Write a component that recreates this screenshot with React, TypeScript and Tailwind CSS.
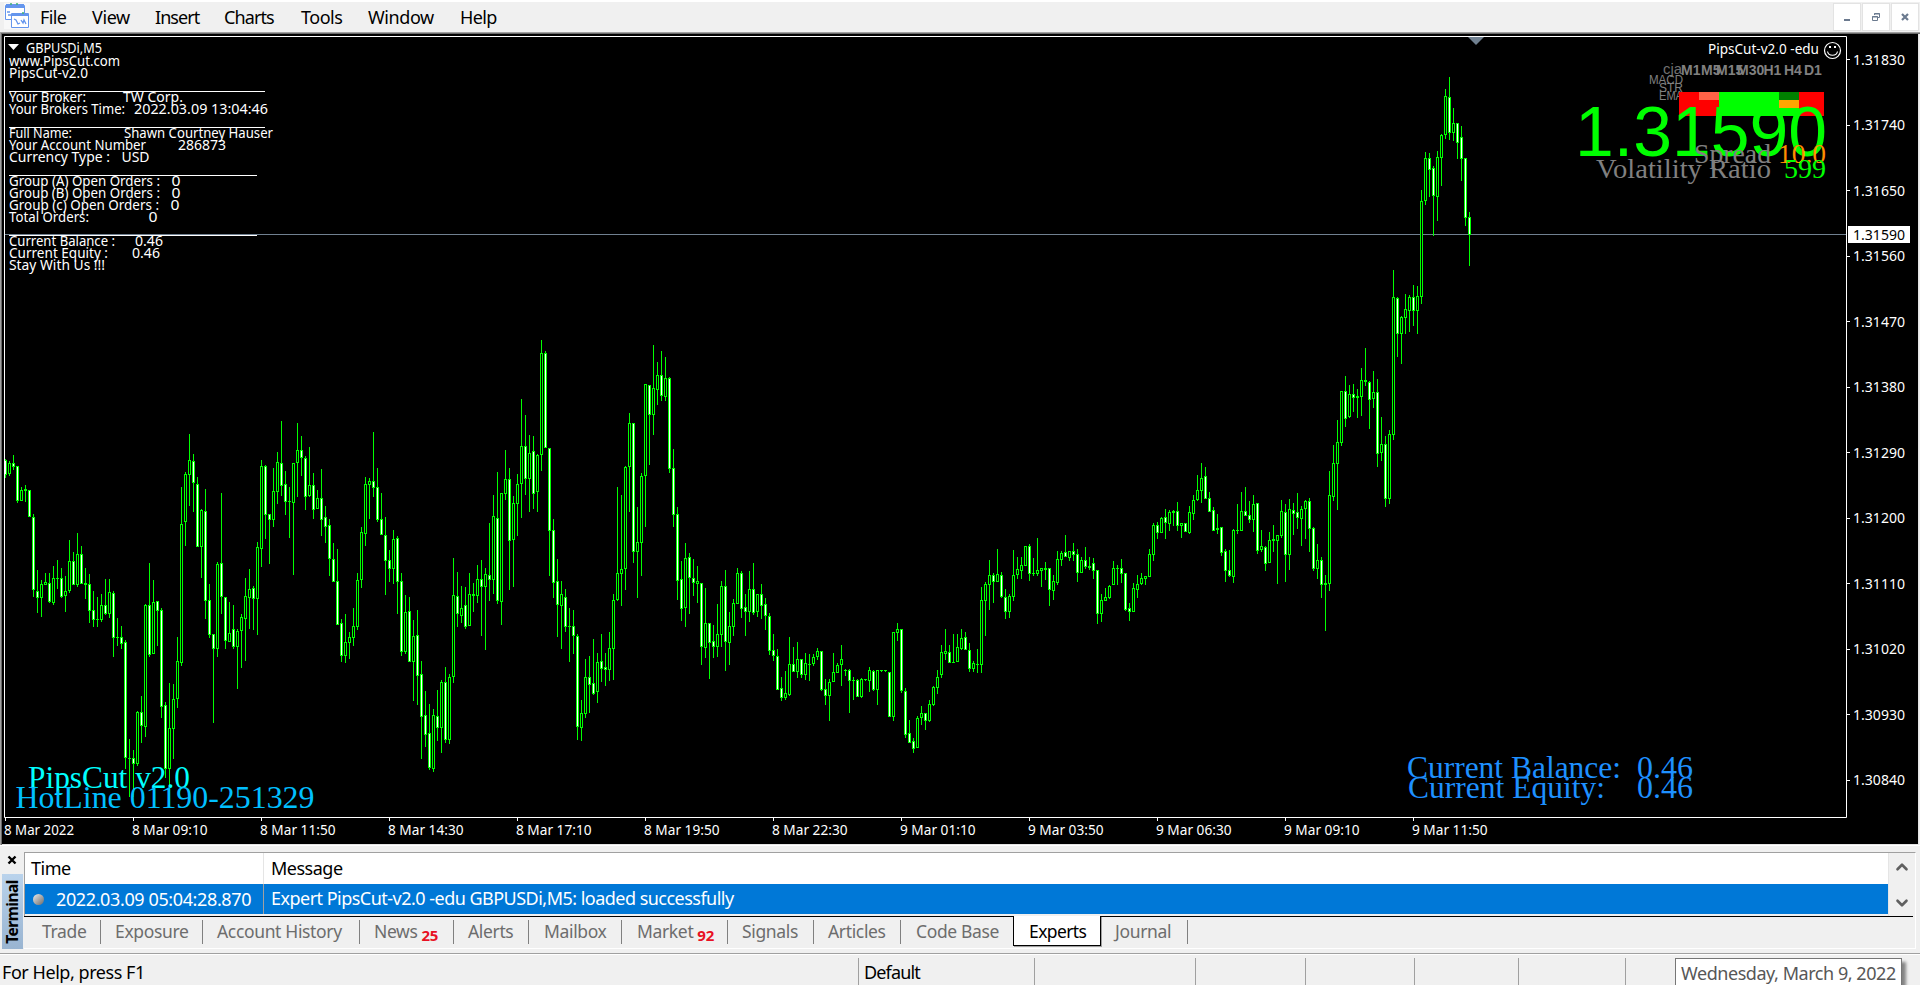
import React from 'react';
import { ChevronDown, ChevronUp } from 'lucide-react';
import clsx from 'clsx';

const LIME = '#00ff00';
const UI_FONT = "font-['Noto_Sans','Open_Sans',sans-serif]";
const CHART_FONT = "'Noto Sans', 'Open Sans', sans-serif";
const ARIAL = "'Liberation Sans', Arial, sans-serif";
const TIMES = "'Liberation Serif', 'Times New Roman', serif";

interface Segment {
  first: number;
  top: number;
  scale: number;
  rows: string;
}

// high/open-close top/open-close bottom/low, "-" for a falling bar and "+" for a rising one
const segments: Segment[] = [
  {
    first: 0,
    top: 400,
    scale: 3,
    rows: `
      177/180/224/234- 183/189/221/228+ 165/189/200/210- 198/198/303/308- 261/270/303/303+
      255/267/273/306- 270/270/351/351- 342/351/570/591- 510/573/594/639- 540/552/594/651+
      519/546/555/555+ 519/549/606/609- 498/534/609/615+ 480/534/537/567+ 504/534/591/594-
      528/573/588/636+ 420/483/573/579+ 456/483/555/555- 399/462/555/560+ 438/462/552/552-
      504/549/555/597- 522/552/633/669- 573/630/660/681- 591/657/660/681+ 582/615/660/666+
      537/615/642/645- 537/576/642/654+ 573/579/714/771- 654/711/714/738+ 678/711/732/747-
      720/726/1074/1107- 1017/1074/1077/1190+ 1050/1074/1092/1190- 933/936/1092/1098+ 888/936/978/1029-
      612/615/981/1011+ 489/615/765/771- 540/606/762/762+ 603/603/633/738- 624/630/921/954-
      906/915/1107/1134- 849/984/1107/1160+ 852/897/987/1077+ 711/783/897/924+ 261/372/789/798+
      216/222/366/438+ 102/180/225/318+ 162/183/249/336- 231/252/441/441- 327/330/441/534+
      267/333/603/657- 552/600/705/714- 702/702/747/969- 486/492/747/771+ 279/489/591/642-
      591/591/723/747- 606/699/726/726+ 615/687/741/747- 687/693/741/867+ 642/651/693/804+
      534/588/657/783+ 507/567/594/687+ 558/564/597/690- 426/441/597/705+ 180/198/447/501+
      195/198/345/417- 342/342/360/492- 204/273/360/381+ 156/186/276/312+ 63/189/258/288-
      213/252/306/345- 261/303/306/414+ 189/189/309/525+ 69/150/189/291+ 108/150/174/228-
      168/174/291/330- 141/255/288/291+ 219/255/330/357- 270/294/327/327+`,
  },
  {
    first: 79,
    top: 320,
    scale: 3,
    rows: `
      447/534/600/648- 558/591/621/669- 597/615/717/768- 669/717/786/786- 687/783/915/915-
      897/909/1008/1026- 882/966/1008/1029+ 936/951/969/1017+ 864/918/954/978+ 759/780/921/930+
      621/636/780/804+ 471/492/642/678+ 474/483/495/597+ 336/483/504/531- 444/501/600/606-
      519/597/645/645- 591/645/723/825- 690/720/747/786- 630/657/747/792+ 648/654/786/882-
      759/783/996/1008- 825/876/996/1002+ 831/873/1026/1026- 900/948/1026/1143+ 870/945/1068/1155-
      1023/1062/1191/1317- 1113/1185/1245/1281- 1152/1239/1344/1350- 1167/1185/1347/1356+ 1110/1188/1224/1263-
      1080/1086/1224/1299+ 1041/1086/1260/1269- 1062/1071/1260/1272+ 714/825/1071/1089+ 756/828/882/921-
      798/864/888/909+ 801/855/921/927- 759/822/918/918+ 789/822/828/876+ 735/777/828/849+
      720/777/801/948- 744/762/801/990+ 609/765/780/843- 525/588/780/822+ 456/594/843/852-
      519/519/846/915+ 390/477/522/540+ 444/477/663/810- 528/549/660/801+ 462/492/552/648+
      237/378/492/594+ 285/378/477/525- 345/399/477/576+ 348/393/522/567- 402/405/516/576+
      60/99/405/453+ 93/99/384/384- 384/384/633/768- 597/630/789/834- 717/783/855/951-
      783/822/858/987+ 807/831/921/936- 864/918/921/1026+ 870/918/948/1002- 942/948/1221/1260-
      1140/1179/1224/1263+ 1017/1071/1182/1194+ 1008/1071/1095/1179- 957/1089/1122/1125- 999/1026/1116/1149+
      942/1023/1047/1086- 999/1041/1050/1098- 936/984/1050/1083+ 822/840/987/1080+ 501/759/840/843+
      525/747/762/858+ 438/441/747/810+ 279/309/441/576+ 309/309/696/729- 561/666/696/834+
      459/468/669/768+ 192/192/468/621+ 195/195/285/435- 75/204/285/345+ 126/165/210/255+
      93/165/228/243- 111/174/231/243+ 171/174/447/459- 387/444/585/621- 561/582/783/840-
      723/777/867/903- 669/714/864/921+ 699/711/774/882- 717/774/789/828- 738/783/792/849+
      789/789/981/1035- 804/909/984/1014+ 909/909/969/1077- 915/963/981/1014- 852/942/981/1011+
      783/798/945/981+ 750/798/966/1053- 876/918/969/1035+ 837/849/921/948+ 744/759/852/852+
      753/759/867/894- 822/861/876/948- 753/807/876/906+ 729/807/879/885- 822/822/876/891+
      792/822/858/897- 834/852/888/930- 879/888/993/1005- 942/990/1008/1023- 987/1008/1110/1110-
      1071/1104/1134/1143- 1053/1119/1134/1140+ 951/1032/1125/1128+ 981/1032/1056/1056- 966/1017/1056/1074+
      1017/1017/1065/1074- 999/1029/1065/1080+ 1002/1032/1035/1083+ 1002/1011/1032/1038+ 984/993/1011/1020+
      993/993/1110/1113- 1077/1107/1128/1155- 1077/1086/1128/1203+ 999/1056/1086/1086+ 1029/1035/1059/1059+
      975/1017/1035/1098+ 1047/1050/1053/1068+ 1047/1050/1083/1179- 1071/1080/1083/1140+ 1077/1080/1131/1131-
      1074/1077/1131/1134+ 1077/1077/1080/1083+ 1041/1050/1083/1116+ 1050/1053/1110/1113- 1050/1050/1110/1155+
      1050/1050/1053/1056+ 1050/1050/1053/1056+ 1056/1056/1191/1191- 936/936/1191/1203+ 909/927/939/963+
      927/927/1113/1119- 1104/1113/1245/1254- 1200/1239/1269/1269- 1254/1263/1287/1299- 1188/1194/1284/1284+
      1158/1179/1194/1215+ 1179/1179/1203/1230- 1140/1152/1203/1206+ 1098/1101/1155/1158+ 1050/1071/1104/1122+
      975/996/1065/1074+`,
  },
  {
    first: 235,
    top: 440,
    scale: 3,
    rows: `
      567/633/642/660+ 615/636/669/669- 582/666/669/669+ 582/621/666/666+ 567/594/627/630+
      576/591/630/630- 609/630/687/696- 663/669/687/696+ 627/672/675/699+ 441/480/675/699+
      426/432/483/588+ 360/405/435/510+ 399/405/426/489- 327/402/426/426+ 396/405/471/474-
      447/471/516/537- 462/468/516/534+ 330/405/471/483+ 351/387/405/417+ 351/375/393/417+
      318/318/378/378+ 312/318/402/423- 354/399/402/408+ 294/390/402/408+ 384/384/393/441+
      366/384/390/420+ 384/384/450/498- 405/423/453/480+ 333/357/429/435+ 333/339/360/378+
      285/336/351/351- 333/333/354/363+ 309/333/345/363- 327/342/399/426- 351/360/399/399+
      321/360/381/387- 351/378/384/390+ 354/369/393/417- 390/390/522/552- 462/480/522/546+
      444/471/483/483+ 435/438/474/477+ 363/384/435/435+ 375/384/387/435+ 357/384/402/429-
      399/399/510/513- 489/504/516/543- 429/444/516/516+ 405/432/450/474+ 399/414/432/435+
      408/408/417/435+ 327/342/411/411+ 249/255/345/363+ 246/255/279/297- 231/234/279/279+
      207/231/249/297- 210/216/252/273+ 210/213/219/258+ 186/213/258/273- 249/249/258/294+
      249/249/276/276- 198/216/279/282+ 165/180/222/240+ 105/150/180/183+ 69/114/153/189+
      81/108/177/177- 156/174/216/216- 201/210/273/273- 222/264/270/282+ 261/261/339/348-
      327/333/393/426- 330/390/408/411- 267/270/411/429+ 192/270/273/282+ 156/213/273/273+
      141/213/228/228- 183/225/240/249- 165/192/240/276+ 189/189/333/342-`,
  },
  {
    first: 314,
    top: 60,
    scale: 2.6133,
    rows: `
      1228/1270/1281/1286+ 1270/1273/1317/1335- 1233/1254/1315/1315+ 1215/1252/1257/1286+ 1241/1241/1257/1369+
      1150/1179/1244/1249+ 1160/1181/1294/1364- 1147/1173/1294/1333+ 1158/1176/1186/1241- 1132/1181/1197/1226-
      1166/1173/1200/1270+ 1150/1152/1173/1252+ 1145/1152/1226/1286- 1220/1223/1330/1335- 1265/1307/1330/1356+
      1299/1307/1372/1406- 1346/1367/1372/1492+ 1074/1137/1369/1388+ 1006/1053/1142/1152+ 941/998/1056/1176+
      865/865/1001/1009+ 826/865/938/959- 849/873/933/936+ 847/873/883/920- 860/878/883/936+
      805/836/881/930+ 753/836/841/852+ 839/841/889/964- 813/868/886/909+ 834/868/1030/1064-
      933/1004/1027/1048+ 983/1004/1147/1168- 967/977/1147/1160+ 549/619/980/993+ 619/622/716/776-
      669/671/716/794+ 612/651/674/716+ 614/619/656/711+ 588/619/656/695- 591/617/656/716+
      340/368/619/638+ 240/256/368/379+ 243/256/287/358- 277/282/355/460- 238/253/358/421+
      193/196/256/329+ 76/94/196/206+ 44/97/191/209- 125/165/191/212+ 165/165/217/259-
      172/201/259/316- 256/256/413/434- 397/410/457/538-`,
  },
];

const candles = segments.flatMap(({ first, top, scale, rows }) =>
  rows.trim().split(/\s+/).map((row, i) => {
    const [high, open, close, low] = row.slice(0, -1).split('/').map((v) => top + Math.round(Number(v) / scale));
    return { x: 5 + (first + i) * 4, high, open, close, low, falling: row.endsWith('-') };
  })
);

const prices = ['1.31830', '1.31740', '1.31650', '1.31560', '1.31470', '1.31380', '1.31290', '1.31200', '1.31110', '1.31020', '1.30930', '1.30840'];

const times = [
  '8 Mar 2022', '8 Mar 09:10', '8 Mar 11:50', '8 Mar 14:30', '8 Mar 17:10', '8 Mar 19:50',
  '8 Mar 22:30', '9 Mar 01:10', '9 Mar 03:50', '9 Mar 06:30', '9 Mar 09:10', '9 Mar 11:50',
];

// text, x, baseline, width
const comments: [string, number, number, number][] = [
  ['GBPUSDi,M5', 26, 53, 76],
  ['www.PipsCut.com', 9, 66, 111],
  ['PipsCut-v2.0', 9, 78, 79],
  ['Your Broker:', 9, 102, 77],
  ['TW Corp.', 123, 102, 60],
  ['Your Brokers Time:', 9, 114, 116],
  ['2022.03.09 13:04:46', 134, 114, 134],
  ['Full Name:', 9, 138, 63],
  ['Shawn Courtney Hauser', 124, 138, 149],
  ['Your Account Number', 9, 150, 137],
  ['286873', 178, 150, 48],
  ['Currency Type :', 9, 162, 101],
  ['USD', 121.5, 162, 28],
  ['Group (A) Open Orders :', 9, 186, 151],
  ['0', 171.5, 186, 9],
  ['Group (B) Open Orders :', 9, 198, 151],
  ['0', 171.5, 198, 9],
  ['Group (c) Open Orders :', 9, 210, 150],
  ['0', 170.5, 210, 9],
  ['Total Orders:', 9, 222, 80],
  ['0', 148.5, 222, 9],
  ['Current Balance :', 9, 246, 106],
  ['0.46', 135, 246, 28],
  ['Current Equity :', 9, 258, 99],
  ['0.46', 132, 258, 28],
  ['Stay With Us !!!', 9, 270, 96],
];

const rules = [
  { y: 91, w: 256 },
  { y: 127, w: 256 },
  { y: 175, w: 248 },
  { y: 235, w: 248 },
];

const timeframes = [
  { label: 'M1', x: 1681 },
  { label: 'M5', x: 1701 },
  { label: 'M15', x: 1716 },
  { label: 'M30', x: 1737 },
  { label: 'H1', x: 1763.5 },
  { label: 'H4', x: 1784 },
  { label: 'D1', x: 1804 },
];

const heat = [
  { x: 1679, y: 92, w: 145, h: 24, fill: '#ff0000' },
  { x: 1699, y: 92, w: 20, h: 8, fill: '#ff6347' },
  { x: 1719, y: 92, w: 60, h: 24, fill: LIME },
  { x: 1779, y: 92, w: 20, h: 8, fill: '#008000' },
  { x: 1779, y: 100, w: 20, h: 8, fill: '#ffa500' },
  { x: 1779, y: 108, w: 20, h: 8, fill: LIME },
];

interface LabelProps {
  x: number;
  y: number;
  size?: number;
  width?: number;
  fill?: string;
  font?: string;
  weight?: number;
  children: string;
}

const Label: React.FC<LabelProps> = ({ x, y, size = 14, width, fill = '#fff', font = CHART_FONT, weight, children }) => (
  <text
    x={x}
    y={y}
    fill={fill}
    fontFamily={font}
    fontSize={size}
    fontWeight={weight}
    textLength={width}
    lengthAdjust="spacingAndGlyphs"
  >
    {children}
  </text>
);

const Candles = () => (
  <g shapeRendering="crispEdges">
    {candles.map(({ x, high, open, close, low, falling }) => (
      <g key={x}>
        <rect x={x} y={high} width={1} height={low - high} fill={LIME} />
        <rect x={x - 1} y={open} width={3} height={close - open} fill={LIME} />
        {close - open > 2 && (
          <rect x={x} y={open + 1} width={1} height={close - open - 2} fill={falling ? '#fff' : '#000'} />
        )}
      </g>
    ))}
  </g>
);

const Chart = () => (
  <svg viewBox="2 34 1916 810" width={1916} height={810} className="block bg-black">
    <rect x={5} y={234} width={1841} height={1} fill="#708090" />
    <Candles />
    <path d="M4.5 36.5H1846.5V817.5H4.5Z" fill="none" stroke="#fff" />
    <path d="M1468 37H1484L1476 45Z" fill="#708090" />

    <path d="M8 44H19L13.500 50Z" fill="#fff" />
    {comments.map(([text, x, y, width]) => (
      <Label key={`${text}${y}`} x={x} y={y} width={width}>{text}</Label>
    ))}
    {rules.map(({ y, w }) => (
      <rect key={y} x={9} y={y} width={w} height={1} fill="#fff" />
    ))}

    <Label x={1708} y={54} width={111}>PipsCut-v2.0 -edu</Label>
    <g fill="none" stroke="#fff" strokeWidth={1.2}>
      <circle cx={1832.5} cy={50.5} r={8} />
      <path d="M1827.500 51.500C1828.500 56.500 1836.500 56.500 1837.500 51.500" />
    </g>
    <rect x={1829} y={46} width={2} height={2} fill="#fff" />
    <rect x={1834} y={46} width={2} height={2} fill="#fff" />

    <Label x={1663} y={74} size={14} width={19} fill="#707070" font={ARIAL}>cja</Label>
    <Label x={1649} y={84} size={12} width={34} fill="#808080" font={ARIAL}>MACD</Label>
    <Label x={1659} y={92} size={12} width={24} fill="#808080" font={ARIAL}>STR</Label>
    <Label x={1659} y={100} size={12} width={24} fill="#808080" font={ARIAL}>EMA</Label>
    {timeframes.map(({ label, x }) => (
      <Label key={label} x={x} y={75} size={14} weight={700} fill="#808080" font={ARIAL}>{label}</Label>
    ))}
    {heat.map(({ x, y, w, h, fill }) => (
      <rect key={`${x}-${y}`} x={x} y={y} width={w} height={h} fill={fill} />
    ))}
    <Label x={1575} y={156} size={70} width={252} fill={LIME} font={ARIAL}>1.31590</Label>
    <Label x={1694} y={163} size={27} width={77} fill="#808080" font={TIMES}>Spread</Label>
    <Label x={1778} y={163} size={27} width={48} fill="#ff8c00" font={TIMES}>10.0</Label>
    <Label x={1596} y={178} size={27} width={175} fill="#808080" font={TIMES}>Volatility Ratio</Label>
    <Label x={1784} y={178} size={27} width={42} fill={LIME} font={TIMES}>599</Label>

    <Label x={28} y={788} size={31} width={162} fill="#00ffff" font={TIMES}>PipsCut v2.0</Label>
    <Label x={15.5} y={808} size={31} width={299} fill="#00bfff" font={TIMES}>HotLine 01190-251329</Label>
    <Label x={1407} y={778} size={31} width={214} fill="#1e90ff" font={TIMES}>Current Balance:</Label>
    <Label x={1637} y={778} size={31} width={56} fill="#1e90ff" font={TIMES}>0.46</Label>
    <Label x={1408} y={798} size={31} width={197} fill="#1e90ff" font={TIMES}>Current Equity:</Label>
    <Label x={1637} y={798} size={31} width={56} fill="#1e90ff" font={TIMES}>0.46</Label>

    {prices.map((price, i) => (
      <g key={price}>
        <rect x={1847} y={Math.round(59 + i * 65.5)} width={3} height={1} fill="#fff" />
        <Label x={1853} y={Math.round(64.6 + i * 65.5)} width={52}>{price}</Label>
      </g>
    ))}
    <rect x={1848} y={226} width={62} height={17} fill="#fff" />
    <Label x={1853} y={240} width={52} fill="#000">1.31590</Label>
    {times.map((time, i) => (
      <g key={time}>
        <rect x={5 + i * 128} y={818} width={1} height={3} fill="#fff" />
        <Label x={4 + i * 128} y={835} width={i === 0 ? 70 : 75.5}>{time}</Label>
      </g>
    ))}
  </svg>
);

const menu = [
  { label: 'File', cls: 'w-[52px] tracking-[-0.6px]' },
  { label: 'View', cls: 'w-[63px] tracking-[-0.4px]' },
  { label: 'Insert', cls: 'w-[69px] tracking-[-0.95px]' },
  { label: 'Charts', cls: 'w-[77px] tracking-[-0.9px]' },
  { label: 'Tools', cls: 'w-[67px] tracking-[-0.5px]' },
  { label: 'Window', cls: 'w-[92px] tracking-[-0.4px]' },
  { label: 'Help', cls: 'w-[60px] tracking-[-0.6px]' },
];

const AppIcon = () => (
  <svg width={26} height={26} viewBox="0 0 26 26" className="bg-[#f8f8f8]">
    <path d="M1.500 2.500H20.500V16.500H1.500Z" fill="#fff" stroke="#6495ed" />
    <path d="M2 1H20V5H2Z" fill="#6495ed" />
    <path d="M3 9H6M4 12H7" stroke="#6495ed" strokeWidth={1.5} />
    <path d="M7.500 10.500H24.500V24.500H7.500Z" fill="#fff" stroke="#6495ed" />
    <path d="M8 10H24V13H8Z" fill="#6495ed" />
    <path d="M10 16L12 17L14 21L16 20M17 17L19 20L20 17L22 21" fill="none" stroke="#6495ed" strokeWidth={1.3} />
    <path d="M6 1H8M12 1H14M18 10H20" stroke="#3cb371" strokeWidth={1.5} />
  </svg>
);

const MenuBar = () => (
  <header className="flex h-8 shrink-0 items-start border-t-2 border-white bg-[#f0f0f0]">
    <div className="ml-1 mt-[1px] w-[36px]"><AppIcon /></div>
    <nav className="flex text-[18px] leading-[30px] text-black">
      {menu.map(({ label, cls }) => (
        <span key={label} className={cls}>{label}</span>
      ))}
    </nav>
    <div className="ml-auto mr-[1px] mt-[1px] flex gap-[1px] text-[#6b7a8f]">
      <button className="grid h-7 w-7 place-items-center border border-[#e3e3e3] bg-white">
        <svg width={12} height={12}><path d="M3 8H9V10H3Z" fill="currentColor" /></svg>
      </button>
      <button className="grid h-7 w-7 place-items-center border border-[#e3e3e3] bg-white">
        <svg width={12} height={12} fill="none" stroke="currentColor">
          <path d="M4.500 4V2.500H9.500V6.500H8M4 3H10M2.500 5.500H7.500V9.500H2.500ZM2 6H8" />
        </svg>
      </button>
      <button className="grid h-7 w-7 place-items-center border border-[#e3e3e3] bg-white">
        <svg width={12} height={12}><path d="M3 3L9 9M9 3L3 9" stroke="currentColor" strokeWidth={2.2} /></svg>
      </button>
    </div>
  </header>
);

interface Tab {
  label: string;
  cls: string;
  badge?: string;
  active?: boolean;
}

const tabs: Tab[] = [
  { label: 'Trade', cls: 'w-[77px] pl-[18px]' },
  { label: 'Exposure', cls: 'w-[102px] pl-[14px]' },
  { label: 'Account History', cls: 'w-[157px] pl-[14px]' },
  { label: 'News', cls: 'w-[94px] pl-[14px]', badge: '25' },
  { label: 'Alerts', cls: 'w-[75px] pl-[14px]' },
  { label: 'Mailbox', cls: 'w-[93px] pl-[15px]' },
  { label: 'Market', cls: 'w-[106px] pl-[15px]', badge: '92' },
  { label: 'Signals', cls: 'w-[86px] pl-[14px]' },
  { label: 'Articles', cls: 'w-[87px] pl-[14px]' },
  { label: 'Code Base', cls: 'w-[112px] pl-[15px]' },
  { label: 'Experts', cls: 'w-[88px] pl-[15px] tracking-[-0.6px]', active: true },
  { label: 'Journal', cls: 'w-[87px] pl-[14px]' },
];

const TabBar = () => (
  <div className="flex h-8 w-[1889px] border-t border-black text-[17.500px] leading-[29px] tracking-[-0.35px] text-[#6d6d6d]">
    {tabs.map(({ label, cls, badge, active }, i) => (
      <div
        key={label}
        className={clsx(
          'flex shrink-0 whitespace-nowrap',
          cls,
          active
            ? '-mt-[1px] h-[30px] border-x border-b border-black bg-white pt-[1px] text-black shadow-[1px_1px_0_#a0a0a0]'
            : clsx('mt-[3px] h-6 leading-[23px]', tabs[i + 1]?.active ? '' : 'border-r border-[#808080]')
        )}
      >
        {label}
        {badge && <span className="ml-[4px] mt-[4px] text-[15px] font-bold tracking-[-0.3px] text-[#e81123]">{badge}</span>}
      </div>
    ))}
  </div>
);

const Terminal = () => (
  <section className="flex h-[108px] shrink-0 border-t border-white pt-[6px]">
    <div className="flex w-6 flex-col items-start pl-[2px]">
      <svg width={20} height={22} className="shrink-0">
        <path d="M6.500 4.500L13.500 11.500M13.500 4.500L6.500 11.500" stroke="#000" strokeWidth={2.4} />
      </svg>
      <div className="grid h-[75px] w-[21px] place-items-center bg-linear-to-b from-[#bad3ec] to-[#99b4d1]">
        <span className="rotate-180 text-[15.500px] leading-none font-bold tracking-[-0.5px] text-black [writing-mode:vertical-rl]">
          Terminal
        </span>
      </div>
    </div>
    <div className="h-[97px] w-[1892px] border-t border-r border-b border-t-[#a0a0a0] border-r-white border-b-white">
      <div className="flex h-[63px]">
        <div className="w-[1864px] border-l border-[#a0a0a0]">
          <div className="flex h-[31px] bg-white text-[18px] leading-[30px] tracking-[-0.5px] text-black">
            <span className="w-[239px] border-r border-[#e5e5e5] pl-[6px]">Time</span>
            <span className="pl-[7px]">Message</span>
          </div>
          <div className="flex h-[30px] bg-[#0078d7] text-[18px] leading-[29px] text-white">
            <div className="flex w-[239px] items-center border-r border-[#a0a0a0]">
              <span className="ml-[8px] h-[11px] w-[11px] rounded-full bg-linear-to-br from-[#eeeeee] to-[#6b6b6b]" />
              <span className="ml-[12px] tracking-[-0.38px]">2022.03.09 05:04:28.870</span>
            </div>
            <span className="pl-[7px] tracking-[-0.52px]">Expert PipsCut-v2.0 -edu GBPUSDi,M5: loaded successfully</span>
          </div>
        </div>
        <div className="flex w-[27px] flex-col items-center justify-between border-l border-[#e5e5e5] pt-[5px] pb-[4px] text-[#606060]">
          <ChevronUp size={18} strokeWidth={3.5} />
          <ChevronDown size={18} strokeWidth={3.5} />
        </div>
      </div>
      <TabBar />
    </div>
  </section>
);

const StatusBar = () => (
  <footer className="flex h-8 shrink-0 border-t border-[#a0a0a0] text-[18px] leading-[28px] tracking-[-0.45px] text-black">
    <div className="flex w-full border-t border-white pt-[3px]">
      <span className="w-[858px] pl-[2px]">For Help, press F1</span>
      <span className="w-[176px] border-l border-[#a0a0a0] pl-[5px] tracking-[-0.85px]">Default</span>
      <span className="w-[161px] border-l border-[#a0a0a0]" />
      <span className="w-[110px] border-l border-[#a0a0a0]" />
      <span className="w-[109px] border-l border-[#a0a0a0]" />
      <span className="w-[104px] border-l border-[#a0a0a0]" />
      <span className="w-[107px] border-l border-[#a0a0a0]" />
      <span className="w-[50px] border-l border-[#a0a0a0]" />
      <span className="h-10 w-[227px] border border-[#767676] bg-white pl-[5px] whitespace-nowrap text-[#575757] shadow-[4px_4px_3px_rgba(0,0,0,0.45)]">
        Wednesday, March 9, 2022
      </span>
    </div>
  </footer>
);

export default function App() {
  return (
    <div className={`flex h-[985px] w-[1920px] flex-col overflow-hidden bg-[#f0f0f0] ${UI_FONT}`}>
      <MenuBar />
      <div className="h-[813px] shrink-0 border-t border-l border-[#a0a0a0]">
        <div className="h-[812px] border-t border-l border-[#696969]">
          <div className="h-[811px] w-[1917px] border-r border-b border-[#e3e3e3]">
            <Chart />
          </div>
        </div>
      </div>
      <Terminal />
      <StatusBar />
    </div>
  );
}
